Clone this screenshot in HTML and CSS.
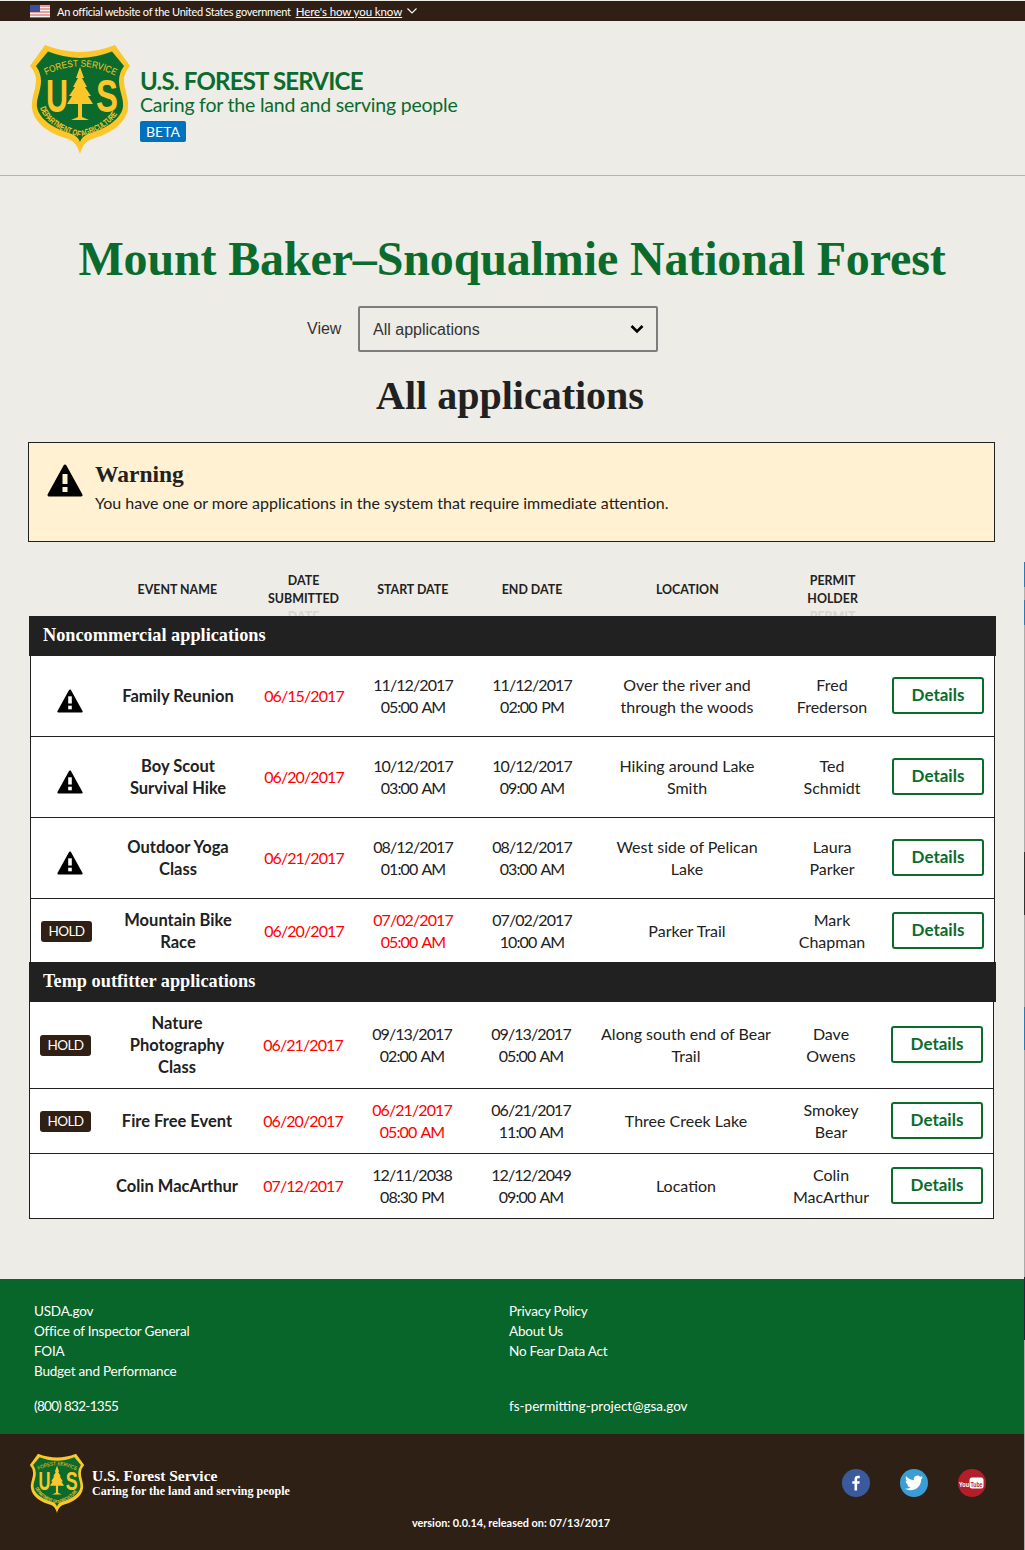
FILE: index.html
```html
<!DOCTYPE html>
<html lang="en">
<head>
    <meta charset="UTF-8">
    <meta name="viewport" content="width=device-width, initial-scale=1.0">
    <title>Mount Baker-Snoqualmie National Forest</title>
    <link rel="stylesheet" href="styles.css">
</head>
<body>
    <svg class="sprites" width="0" height="0" aria-hidden="true">
        <defs>
            <path id="arc-top" d="M21 35 Q55 18 89 35"/>
            <path id="arc-bottom" d="M15 68 Q22 88 55 97 Q88 88 95 68"/>
            <symbol id="shield" viewBox="0 0 110 116">
                <path fill="#fdc62a" d="M20 5 Q38 12 55 12 Q72 12 90 5 L105 26 Q99 33 99 40 C99 50 104 58 103 68 C101 86 80 95 70 98 C62 100 58 104 55 114 C52 104 48 100 40 98 C30 95 9 86 7 68 C6 58 11 50 11 40 Q11 33 5 26 Z"/>
                <path fill="#0a6b2c" d="M23 11.500 Q40 18 55 18 Q70 18 87 11.500 L99 26 Q94 33 94 41 C94 51 99 58 98 67 C96 81 76 90 66 93 C60 95 57 97 55 102 C53 97 50 95 44 93 C34 90 14 81 12 67 C11 58 16 51 16 41 Q16 33 11 26 Z"/>
                <g fill="#fdc62a" font-family="'Liberation Sans', sans-serif">
                    <text font-size="9.500"><textPath href="#arc-top" textLength="72" lengthAdjust="spacingAndGlyphs">FOREST SERVICE</textPath></text>
                    <text font-size="8.500" font-weight="700"><textPath href="#arc-bottom" textLength="96" lengthAdjust="spacingAndGlyphs">DEPARTMENT OF AGRICULTURE</textPath></text>
                    <text x="21" y="72" font-size="47" font-weight="700" textLength="22" lengthAdjust="spacingAndGlyphs">U</text>
                    <text x="71" y="72" font-size="47" font-weight="700" textLength="22" lengthAdjust="spacingAndGlyphs">S</text>
                    <path d="M55 27 L59 38 L57 38 L62 47 L60 47 L66 56 L63 56 L68 64 L57 64 L57 77 L64 80 L46 80 L53 77 L53 64 L42 64 L47 56 L44 56 L50 47 L48 47 L53 38 L51 38 Z"/>
                </g>
            </symbol>
            <symbol id="warning" viewBox="0 0 36 33">
                <path fill="#000" stroke="#000" stroke-width="3" stroke-linejoin="round" d="M18 2 L34 31 L2 31 Z"/>
                <rect x="15.500" y="10" width="5" height="10" fill="currentColor"/>
                <rect x="15.500" y="23" width="5" height="5" fill="currentColor"/>
            </symbol>
        </defs>
    </svg>

    <div class="gov-banner">
        <svg class="flag" viewBox="0 0 20 13">
            <rect width="20" height="13" fill="#f4f4f4"/>
            <path d="M0 1h20M0 4h20M0 7h20M0 10h20M0 12.500h20" stroke="#d0504f" stroke-width="1.200"/>
            <rect width="10" height="7" fill="#3a4f9e"/>
        </svg>
        <span>An official website of the United States government</span>
        <a href="#">Here's how you know</a>
        <svg class="banner-chevron" viewBox="0 0 10 6"><path d="M.5.5 5 5 9.500.5" fill="none" stroke="#fff" stroke-width="1.100"/></svg>
    </div>

    <header class="site-header">
        <svg class="logo"><use href="#shield"/></svg>
        <div class="brand">
            <div class="brand-name">U.S. FOREST SERVICE</div>
            <div class="brand-tag">Caring for the land and serving people</div>
            <span class="beta">BETA</span>
        </div>
    </header>

    <main class="content">
        <h1>Mount Baker&#8211;Snoqualmie National Forest</h1>

        <div class="view-row">
            <label for="view">View</label>
            <div class="select-wrap">
                <select id="view">
                    <option>All applications</option>
                </select>
                <svg class="select-chevron" viewBox="0 0 14 10"><path d="M1.500 2 7 7.500 12.500 2" fill="none" stroke="#000" stroke-width="2.600"/></svg>
            </div>
        </div>

        <h2>All applications</h2>

        <div class="alert">
            <svg class="alert-icon"><use href="#warning"/></svg>
            <div>
                <h3>Warning</h3>
                <p>You have one or more applications in the system that require immediate attention.</p>
            </div>
        </div>

        <table class="apps apps-head">
            <colgroup>
                <col class="c-flag"><col class="c-event"><col class="c-date"><col class="c-start"><col class="c-end"><col class="c-loc"><col class="c-holder"><col class="c-action">
            </colgroup>
            <thead>
                <tr>
                    <th></th>
                    <th><div class="th-in th-one">Event name</div></th>
                    <th><div class="th-in">Date<br>submitted<br><span class="ghost">Date</span></div></th>
                    <th><div class="th-in th-one">Start date</div></th>
                    <th><div class="th-in th-one">End date</div></th>
                    <th><div class="th-in th-one">Location</div></th>
                    <th><div class="th-in">Permit<br>holder<br><span class="ghost">Permit</span></div></th>
                    <th></th>
                </tr>
            </thead>
        </table>

        <div class="section-bar">Noncommercial applications</div>
        <table class="apps apps-first">
            <colgroup>
                <col class="c-flag"><col class="c-event"><col class="c-date"><col class="c-start"><col class="c-end"><col class="c-loc"><col class="c-holder"><col class="c-action">
            </colgroup>
            <tbody>
                <tr class="row-tall">
                    <td><svg class="row-icon"><use href="#warning"/></svg></td>
                    <td class="name">Family Reunion</td>
                    <td class="late">06/15/2017</td>
                    <td>11/12/2017<br>05:00 AM</td>
                    <td>11/12/2017<br>02:00 PM</td>
                    <td>Over the river and<br>through the woods</td>
                    <td>Fred<br>Frederson</td>
                    <td><a class="btn" href="#">Details</a></td>
                </tr>
                <tr class="row-tall">
                    <td><svg class="row-icon"><use href="#warning"/></svg></td>
                    <td class="name">Boy Scout<br>Survival Hike</td>
                    <td class="late">06/20/2017</td>
                    <td>10/12/2017<br>03:00 AM</td>
                    <td>10/12/2017<br>09:00 AM</td>
                    <td>Hiking around Lake<br>Smith</td>
                    <td>Ted<br>Schmidt</td>
                    <td><a class="btn" href="#">Details</a></td>
                </tr>
                <tr class="row-tall">
                    <td><svg class="row-icon"><use href="#warning"/></svg></td>
                    <td class="name">Outdoor Yoga<br>Class</td>
                    <td class="late">06/21/2017</td>
                    <td>08/12/2017<br>01:00 AM</td>
                    <td>08/12/2017<br>03:00 AM</td>
                    <td>West side of Pelican<br>Lake</td>
                    <td>Laura<br>Parker</td>
                    <td><a class="btn" href="#">Details</a></td>
                </tr>
                <tr>
                    <td><span class="hold">HOLD</span></td>
                    <td class="name">Mountain Bike<br>Race</td>
                    <td class="late">06/20/2017</td>
                    <td class="late">07/02/2017<br>05:00 AM</td>
                    <td>07/02/2017<br>10:00 AM</td>
                    <td>Parker Trail</td>
                    <td>Mark<br>Chapman</td>
                    <td><a class="btn" href="#">Details</a></td>
                </tr>
            </tbody>
        </table>

        <div class="section-bar section-bar-next">Temp outfitter applications</div>
        <table class="apps apps-second">
            <colgroup>
                <col class="c-flag"><col class="c-event"><col class="c-date"><col class="c-start"><col class="c-end"><col class="c-loc"><col class="c-holder"><col class="c-action">
            </colgroup>
            <tbody>
                <tr>
                    <td><span class="hold">HOLD</span></td>
                    <td class="name">Nature<br>Photography<br>Class</td>
                    <td class="late">06/21/2017</td>
                    <td>09/13/2017<br>02:00 AM</td>
                    <td>09/13/2017<br>05:00 AM</td>
                    <td>Along south end of Bear<br>Trail</td>
                    <td>Dave<br>Owens</td>
                    <td><a class="btn" href="#">Details</a></td>
                </tr>
                <tr>
                    <td><span class="hold">HOLD</span></td>
                    <td class="name">Fire Free Event</td>
                    <td class="late">06/20/2017</td>
                    <td class="late">06/21/2017<br>05:00 AM</td>
                    <td>06/21/2017<br>11:00 AM</td>
                    <td>Three Creek Lake</td>
                    <td>Smokey<br>Bear</td>
                    <td><a class="btn" href="#">Details</a></td>
                </tr>
                <tr>
                    <td></td>
                    <td class="name">Colin MacArthur</td>
                    <td class="late">07/12/2017</td>
                    <td>12/11/2038<br>08:30 PM</td>
                    <td>12/12/2049<br>09:00 AM</td>
                    <td>Location</td>
                    <td>Colin<br>MacArthur</td>
                    <td><a class="btn" href="#">Details</a></td>
                </tr>
            </tbody>
        </table>
    </main>

    <footer>
        <div class="footer-links">
            <div class="footer-col">
                <ul>
                    <li><a href="#">USDA.gov</a></li>
                    <li><a href="#">Office of Inspector General</a></li>
                    <li><a href="#">FOIA</a></li>
                    <li><a href="#">Budget and Performance</a></li>
                </ul>
                <div class="footer-contact footer-phone">(800) 832-1355</div>
            </div>
            <div class="footer-col">
                <ul>
                    <li><a href="#">Privacy Policy</a></li>
                    <li><a href="#">About Us</a></li>
                    <li><a href="#">No Fear Data Act</a></li>
                    <li>&nbsp;</li>
                </ul>
                <div class="footer-contact">fs-permitting-project@gsa.gov</div>
            </div>
        </div>
        <div class="footer-base">
            <div class="footer-top">
                <svg class="footer-logo"><use href="#shield"/></svg>
                <div class="footer-brand">
                    <div class="footer-name">U.S. Forest Service</div>
                    <div class="footer-tag">Caring for the land and serving people</div>
                </div>
                <div class="social">
                    <a class="social-link fb" href="#" aria-label="Facebook">
                        <svg viewBox="0 0 24 24"><path fill="#fff" d="M13.500 22v-9h3l.5-3.500h-3.500V7.300c0-1 .3-1.700 1.700-1.700H17V2.400C16.700 2.400 15.600 2.300 14.400 2.300c-2.600 0-4.400 1.600-4.400 4.500v2.700H7V13h3v9z"/></svg>
                    </a>
                    <a class="social-link tw" href="#" aria-label="Twitter">
                        <svg viewBox="0 0 24 24"><path fill="#fff" d="M23.950 4.570a10 10 0 01-2.820.77 4.960 4.960 0 002.160-2.720c-.95.55-2 .95-3.120 1.180a4.920 4.920 0 00-8.380 4.480C7.690 8.090 4.070 6.130 1.640 3.160a4.820 4.820 0 00-.67 2.480c0 1.710.87 3.210 2.190 4.100a4.900 4.900 0 01-2.230-.62v.06a4.920 4.920 0 003.950 4.830 5 5 0 01-2.210.08 4.940 4.940 0 004.600 3.420A9.870 9.870 0 010 19.540a13.940 13.940 0 007.550 2.210c9.050 0 14-7.500 14-13.980 0-.21 0-.42-.02-.63a9.940 9.940 0 002.460-2.550z"/></svg>
                    </a>
                    <a class="social-link yt" href="#" aria-label="YouTube">
                        <svg viewBox="0 0 28 28">
                            <rect x="11.500" y="8.500" width="14" height="11" rx="2.500" fill="#fff"/>
                            <text x="1" y="17.500" class="yt-you" textLength="10" lengthAdjust="spacingAndGlyphs">You</text>
                            <text x="12.500" y="17.500" class="yt-tube" textLength="12" lengthAdjust="spacingAndGlyphs">Tube</text>
                        </svg>
                    </a>
                </div>
            </div>
            <div class="version">version: 0.0.14, released on: 07/13/2017</div>
        </div>
    </footer>

    <div class="edge-strip"></div>
</body>
</html>
```

FILE: styles.css
```css
body {
    font-family: 'Lato', 'Liberation Sans', sans-serif;
    font-size: 16px;
    background-color: #eeece6;
    margin: 0;
    color: #212121;
    position: relative;
}

a {
    color: inherit;
}

.sprites {
    position: absolute;
}

/* gov banner */
.gov-banner {
    display: flex;
    align-items: center;
    height: 20px;
    margin-top: 1px;
    padding-left: 30px;
    background-color: #2f1f14;
    color: #fff;
    font-size: 11px;
    letter-spacing: -0.3px;
    white-space: nowrap;
}

.flag {
    width: 20px;
    height: 13px;
    margin-right: 7px;
}

.gov-banner a {
    margin-left: 5px;
    font-size: 11.5px;
    letter-spacing: -0.1px;
}

.banner-chevron {
    width: 10px;
    height: 6px;
    margin-left: 5px;
}

/* site header */
.site-header {
    display: flex;
    height: 154px;
    box-sizing: content-box;
    border-bottom: 1px solid #b4b4b2;
}

.logo {
    width: 110px;
    height: 116px;
    margin: 19px 5px 0 25px;
}

.brand {
    padding-top: 46px;
    color: #0a6b2c;
}

.brand-name {
    font-size: 24px;
    line-height: 28px;
    font-weight: 700;
    letter-spacing: -0.8px;
}

.brand-tag {
    font-size: 19.500px;
    letter-spacing: -0.2px;
    line-height: 25px;
    margin-top: -3px;
}

.beta {
    display: inline-block;
    margin-top: 4px;
    padding: 0 6px;
    background-color: #0071bc;
    border-radius: 2px;
    color: #fff;
    font-size: 14px;
    line-height: 21px;
}

/* main */
.content {
    padding: 0 29px;
    margin-bottom: 60px;
}

h1,
h2,
h3,
.section-bar,
.footer-name,
.footer-tag {
    font-family: 'Liberation Serif', serif;
    font-weight: 700;
}

h1 {
    margin: 52px -29px 0 -30px;
    color: #0a6b2c;
    font-size: 48px;
    letter-spacing: -0.14px;
    line-height: 62px;
    text-align: center;
    white-space: nowrap;
}

.view-row {
    display: flex;
    align-items: center;
    margin: 16px 0 0 278px;
    font-family: 'Liberation Sans', sans-serif;
    color: #333;
}

.view-row label {
    width: 51px;
}

.select-wrap {
    position: relative;
    width: 300px;
    height: 46px;
}

.select-wrap select {
    appearance: none;
    width: 100%;
    height: 100%;
    padding: 0 0 0 13px;
    background: transparent;
    border: 2px solid #7d7d7d;
    border-radius: 2px;
    font-family: inherit;
    font-size: 16px;
    color: #333;
}

.select-chevron {
    position: absolute;
    top: 18px;
    right: 14px;
    width: 14px;
    height: 10px;
}

h2 {
    margin: 19px 0 0 -5px;
    font-size: 40px;
    line-height: 50px;
    text-align: center;
}

.alert {
    display: flex;
    height: 98px;
    margin: 21px 1px 0 -1px;
    background-color: #fff1d2;
    border: 1px solid #212121;
}

.alert-icon {
    width: 36px;
    height: 33px;
    margin: 21px 12px 0 18px;
    color: #fff1d2;
}

.alert h3 {
    margin: 15px 0 0;
    font-size: 23.500px;
    line-height: 32px;
}

.alert p {
    margin: 1px 0 0;
    font-size: 16px;
    line-height: 24px;
}

/* applications table */
.apps {
    width: 965px;
    table-layout: fixed;
    border-collapse: separate;
    border-spacing: 0;
    text-align: center;
    font-size: 16px;
    line-height: 22px;
}

.c-flag { width: 71px; }
.c-event { width: 152px; }
.c-date { width: 100px; }
.c-start { width: 118px; }
.c-end { width: 120px; }
.c-loc { width: 190px; }
.c-holder { width: 100px; }
.c-action { width: 112px; }

.apps-head {
    margin: 18px 0 0 1px;
}

.apps-head th {
    padding: 0;
}

.th-in {
    height: 56px;
    padding-top: 12px;
    box-sizing: border-box;
    overflow: hidden;
    font-size: 12.400px;
    line-height: 18px;
    text-transform: uppercase;
    white-space: nowrap;
}

.th-one {
    padding-top: 21px;
}

.ghost {
    color: #d8d6d0;
}

.section-bar {
    height: 40px;
    width: 967px;
    padding-left: 14px;
    box-sizing: border-box;
    background-color: #212121;
    color: #fff;
    font-size: 18.300px;
    line-height: 38px;
}

.section-bar-next {
    margin-top: -1px;
    position: relative;
}

.apps-first,
.apps-second {
    background-color: #fff;
    border-left: 1px solid #212121;
    border-right: 1px solid #212121;
}

.apps-first {
    margin-left: 1px;
}

.apps td {
    padding: 10px 0;
    border-bottom: 1px solid #212121;
    vertical-align: middle;
}

/* lato digits are wide, pull the date columns in */
.apps td:nth-child(3),
.apps td:nth-child(4),
.apps td:nth-child(5) {
    letter-spacing: -0.9px;
    word-spacing: 1.5px;
}

.apps-first tr:last-child td {
    border-bottom: 0;
}

.row-tall {
    height: 81px;
}

.name {
    font-size: 16.500px;
    font-weight: 700;
}

.late {
    color: #f00;
}

.row-icon {
    display: block;
    width: 26px;
    height: 24px;
    margin: 10px 0 0 26px;
    color: #fff;
}

.hold {
    display: inline-block;
    width: 51px;
    margin-bottom: 2px;
    background-color: #2f1f14;
    border-radius: 3px;
    color: #fff;
    font-size: 13.500px;
    letter-spacing: -0.6px;
    line-height: 21px;
}

.btn {
    display: block;
    width: 92px;
    height: 37px;
    margin: 0 auto 1px;
    box-sizing: border-box;
    background-color: #fff;
    border: 2px solid #0a6b2c;
    border-radius: 3px;
    color: #0a6b2c;
    font-size: 17px;
    font-weight: 700;
    line-height: 32px;
    text-decoration: none;
}

/* footer */
.footer-links {
    display: flex;
    height: 155px;
    padding: 22px 0 0 34px;
    box-sizing: border-box;
    background-color: #08662b;
    color: #fff;
    font-size: 13.500px;
}

.footer-col {
    width: 475px;
}

.footer-col ul {
    margin: 0;
    padding: 0;
    list-style: none;
    line-height: 20px;
    letter-spacing: -0.2px;
}

.footer-col a {
    text-decoration: none;
}

.footer-contact {
    margin-top: 15px;
    line-height: 20px;
}

.footer-phone {
    letter-spacing: -0.7px;
}

.footer-base {
    height: 116px;
    background-color: #2e2015;
    color: #fff;
}

.footer-top {
    display: flex;
    padding-top: 20px;
}

.footer-logo {
    width: 60px;
    height: 63px;
    margin: -3px 5px 0 27px;
}

.footer-brand {
    padding-top: 14px;
    width: 750px;
}

.footer-name {
    font-size: 15.500px;
    line-height: 16px;
}

.footer-tag {
    font-size: 12px;
    line-height: 14px;
}

.social {
    display: flex;
    gap: 30px;
    padding-top: 15px;
}

.social-link {
    display: flex;
    width: 28px;
    height: 28px;
    border-radius: 50%;
    align-items: center;
    justify-content: center;
}

.social-link svg {
    width: 18px;
    height: 18px;
}

.social-link.yt svg {
    width: 28px;
    height: 28px;
}

.fb { background-color: #3b5a9e; }
.tw { background-color: #3a9dd6; }
.yt { background-color: #b21f2a; }

.yt-you,
.yt-tube {
    font-family: 'Liberation Sans', sans-serif;
    font-size: 8px;
    font-weight: 700;
}

.yt-you { fill: #fff; }
.yt-tube { fill: #b21f2a; }

.version {
    margin-top: 2px;
    padding-right: 3px;
    font-size: 10.900px;
    font-weight: 700;
    text-align: center;
}

/* thin strip left on the right edge of the capture */
.edge-strip {
    position: absolute;
    top: 0;
    right: 0;
    width: 1px;
    height: 1550px;
    background: linear-gradient(to bottom,
        transparent 0 562px, #2a7ab8 562px 587px, #b0aea9 587px 600px, #2a7ab8 600px 625px,
        #aaa 625px 852px, #333 852px 915px, #aaa 915px 1007px, #2a7ab8 1007px 1050px,
        #aaa 1050px 1277px, #22263a 1277px 1340px, #aaa 1340px);
}
```
